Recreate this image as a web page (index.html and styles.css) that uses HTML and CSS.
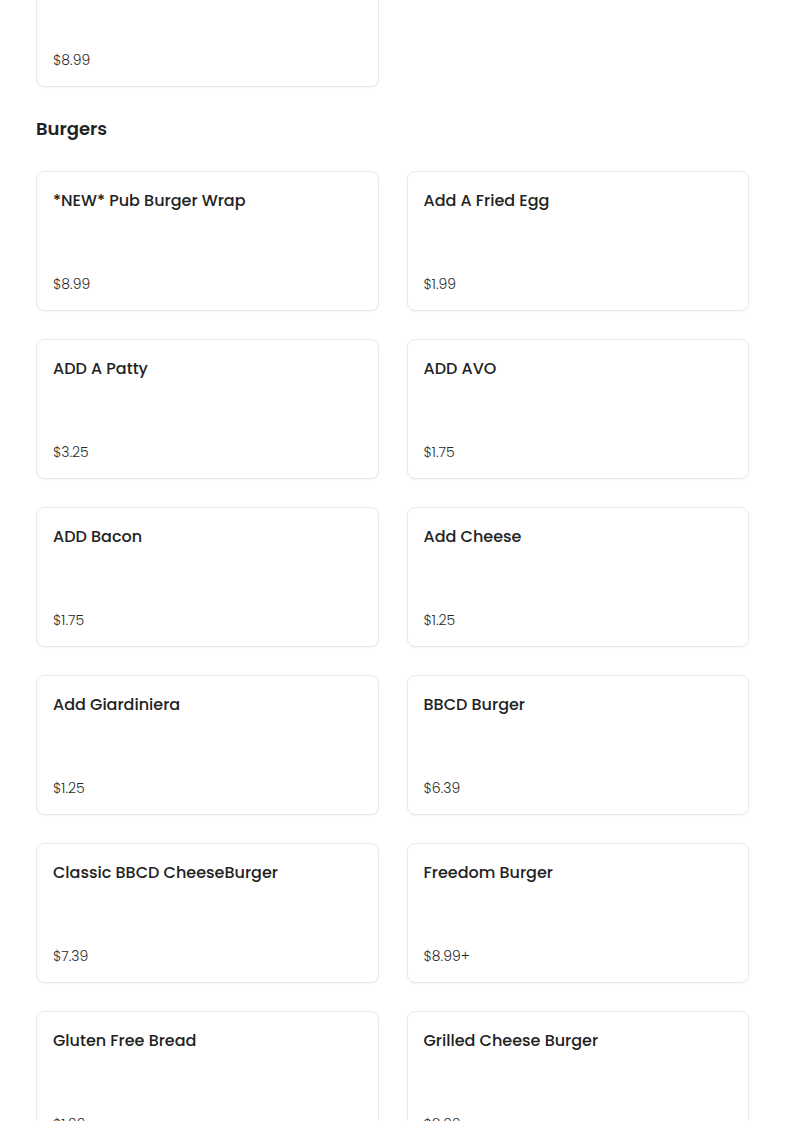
FILE: index.html
```html
<!DOCTYPE html>
<html lang="en">
<head>
<meta charset="utf-8">
<title>Menu</title>
<link rel="stylesheet" href="styles.css">
</head>
<body>
<main class="menu">
  <section class="category">
    <div class="grid">
      <div class="card">
        <h3 class="card-title">Pub Wrap</h3>
        <p class="card-price">$8.99</p>
      </div>
    </div>
  </section>
  <section class="category">
    <h2 class="category-title">Burgers</h2>
    <div class="grid">
      <div class="card"><h3 class="card-title">*NEW* Pub Burger Wrap</h3><p class="card-price">$8.99</p></div>
      <div class="card"><h3 class="card-title">Add A Fried Egg</h3><p class="card-price">$1.99</p></div>
      <div class="card"><h3 class="card-title">ADD A Patty</h3><p class="card-price">$3.25</p></div>
      <div class="card"><h3 class="card-title">ADD AVO</h3><p class="card-price">$1.75</p></div>
      <div class="card"><h3 class="card-title">ADD Bacon</h3><p class="card-price">$1.75</p></div>
      <div class="card"><h3 class="card-title">Add Cheese</h3><p class="card-price">$1.25</p></div>
      <div class="card"><h3 class="card-title">Add Giardiniera</h3><p class="card-price">$1.25</p></div>
      <div class="card"><h3 class="card-title">BBCD Burger</h3><p class="card-price">$6.39</p></div>
      <div class="card"><h3 class="card-title">Classic BBCD CheeseBurger</h3><p class="card-price">$7.39</p></div>
      <div class="card"><h3 class="card-title">Freedom Burger</h3><p class="card-price">$8.99+</p></div>
      <div class="card"><h3 class="card-title">Gluten Free Bread</h3><p class="card-price">$1.99</p></div>
      <div class="card"><h3 class="card-title">Grilled Cheese Burger</h3><p class="card-price">$8.99</p></div>
    </div>
  </section>
</main>
</body>
</html>
```

FILE: styles.css
```css
html, body {
  margin: 0;
  padding: 0;
  background: #ffffff;
}
body {
  font-family: "Poppins", "Open Sans", "Noto Sans", sans-serif;
  color: #222222;
}
.menu {
  display: flex;
  flex-direction: column;
  gap: 28px;
  padding: 0 36px;
  margin-top: -53px;
}
.category {
  display: flex;
  flex-direction: column;
  gap: 28px;
}
.category-title {
  margin: 0;
  font-size: 18px;
  line-height: 28px;
  font-weight: 600;
  color: #222222;
}
.grid {
  display: grid;
  grid-template-columns: 1fr 1fr;
  gap: 28px;
}
.card {
  box-sizing: border-box;
  height: 140px;
  padding: 16px;
  border: 1px solid #e9e9e9;
  border-radius: 8px;
  box-shadow: 0 1px 2px rgba(0, 0, 0, 0.04);
  display: flex;
  flex-direction: column;
  justify-content: space-between;
}
.card-title {
  margin: 0;
  font-size: 16px;
  line-height: 26px;
  font-weight: 500;
  color: #222222;
}
.card-price {
  margin: 0;
  font-size: 14px;
  line-height: 20px;
  font-weight: 300;
  color: #2a2a2a;
}
```
